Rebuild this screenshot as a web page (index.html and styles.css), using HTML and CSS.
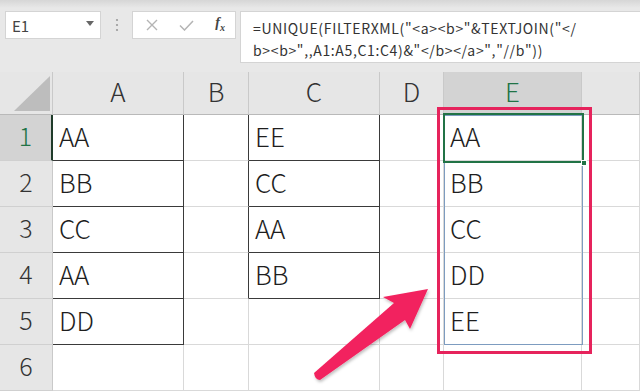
FILE: index.html
```html
<!doctype html>
<html lang="ja">
    <head>
        <meta charset="utf-8">
        <title>UNIQUE + FILTERXML</title>
        <link rel="stylesheet" href="styles.css">
    </head>
 <body>
    <div class="page">
        <!-- 数式バー -->
        <div class="bar">
            <div class="namebox">
                <span>E1</span>
                <svg class="caret" width="8" height="5" viewBox="0 0 8 5"><path d="M0 0h8L4 5z" fill="#666"/></svg>
            </div>
            <div class="grip">
                <svg width="4" height="14" viewBox="0 0 4 14"><circle cx="2" cy="2" r="1.1" fill="#9a9a9a"/><circle cx="2" cy="7" r="1.1" fill="#9a9a9a"/><circle cx="2" cy="12" r="1.1" fill="#9a9a9a"/></svg>
            </div>
            <div class="fxbox">
                <svg width="12" height="12" viewBox="0 0 12 12"><path d="M1 1l10 10M11 1L1 11" stroke="#b4b4b4" stroke-width="1.4" fill="none"/></svg>
                <svg width="15" height="11" viewBox="0 0 15 11"><path d="M1 5.5l4.5 4.5L14 1" stroke="#b4b4b4" stroke-width="1.5" fill="none"/></svg>
                <span class="fx">f<sub>x</sub></span>
            </div>
            <div class="formula">=UNIQUE(FILTERXML("&lt;a&gt;&lt;b&gt;"&amp;TEXTJOIN("&lt;/<br>b&gt;&lt;b&gt;",,A1:A5,C1:C4)&amp;"&lt;/b&gt;&lt;/a&gt;","//b"))</div>
        </div>

        <!-- シート -->
        <div class="sheet">
            <div class="hd corner">
                <svg width="36" height="35" viewBox="0 0 36 35"><path d="M0 35H36V0z" fill="#bdbdbd"/></svg>
            </div>
            <div class="hd">A</div>
            <div class="hd">B</div>
            <div class="hd">C</div>
            <div class="hd">D</div>
            <div class="hd sel">E</div>
            <div class="hd"></div>

            <div class="rh sel">1</div>
            <div class="c ink-r ink-b">AA</div>
            <div class="c ink-r"></div>
            <div class="c ink-r ink-b">EE</div>
            <div class="c"></div>
            <div class="c">AA</div>
            <div class="c"></div>

            <div class="rh">2</div>
            <div class="c ink-r ink-b">BB</div>
            <div class="c ink-r"></div>
            <div class="c ink-r ink-b">CC</div>
            <div class="c"></div>
            <div class="c">BB</div>
            <div class="c"></div>

            <div class="rh">3</div>
            <div class="c ink-r ink-b">CC</div>
            <div class="c ink-r"></div>
            <div class="c ink-r ink-b">AA</div>
            <div class="c"></div>
            <div class="c">CC</div>
            <div class="c"></div>

            <div class="rh">4</div>
            <div class="c ink-r ink-b">AA</div>
            <div class="c ink-r"></div>
            <div class="c ink-r ink-b">BB</div>
            <div class="c"></div>
            <div class="c">DD</div>
            <div class="c"></div>

            <div class="rh">5</div>
            <div class="c ink-r ink-b">DD</div>
            <div class="c"></div>
            <div class="c"></div>
            <div class="c"></div>
            <div class="c">EE</div>
            <div class="c"></div>

            <div class="rh">6</div>
            <div class="c"></div>
            <div class="c"></div>
            <div class="c"></div>
            <div class="c"></div>
            <div class="c"></div>
            <div class="c"></div>
        </div>

        <!-- 重ねる要素 -->
        <div class="spill"></div>
        <div class="active"><span class="handle"></span></div>
        <div class="mark"></div>
        <svg class="arrow" width="140" height="110" viewBox="300 280 140 110">
            <defs>
                <filter id="sh" x="-20%" y="-20%" width="140%" height="140%">
                    <feDropShadow dx="1" dy="2" stdDeviation="1.5" flood-color="#000" flood-opacity="0.25"/>
                </filter>
            </defs>
            <path d="M314 373 L394 303 L383 297 L428 289 L410 329 L405 320 L320 380 Q315 380 314 373z" fill="#f2235e" filter="url(#sh)"/>
        </svg>
    </div>
 </body>
</html>
```

FILE: styles.css
```css
*{
    margin:0;
    padding:0;
    box-sizing:border-box;
}
html,body{
    width:640px;
    height:391px;
    overflow:hidden;
    background:#fff;
}
.page{
    position:relative;
    width:640px;
    height:391px;
    font-family:"Noto Sans CJK JP","Noto Sans",sans-serif;
    color:#222;
}

/* 数式バー */
.bar{
    height:72px;
    display:flex;
    align-items:flex-start;
    padding:11px 0 0 5px;
    background:linear-gradient(#d6d6d6 0, #e8e8e8 8px, #e8e8e8 100%);
}
.namebox{
    width:96px;
    height:28px;
    background:#fff;
    border:1px solid #d4d4d4;
    display:flex;
    align-items:center;
    justify-content:space-between;
    padding:0 6px 0 6px;
    font-size:15px;
    color:#444;
}
.caret{
    margin-top:-4px;
}
.grip{
    width:31px;
    height:28px;
    display:flex;
    align-items:center;
    justify-content:center;
}
.fxbox{
    width:104px;
    height:28px;
    background:#fff;
    border:1px solid #d4d4d4;
    display:flex;
    align-items:center;
    justify-content:space-between;
    padding:0 10px 0 13px;
}
.fx{
    font-family:"Liberation Serif",serif;
    font-style:italic;
    font-weight:bold;
    font-size:14px;
    color:#444;
    margin-top:-3px;
}
.fx sub{
    font-size:10px;
}
.formula{
    flex:1;
    margin-left:4px;
    height:52px;
    background:#fff;
    border:1px solid #d4d4d4;
    border-right:none;
    padding:5px 0 0 12px;
    font-size:14px;
    letter-spacing:0.65px;
    line-height:22px;
    color:#333;
    white-space:nowrap;
}

/* シート */
.sheet{
    display:grid;
    grid-template-columns:53px 131px 65px 131px 64px 138px 58px;
    grid-template-rows:43px repeat(6,46px);
}
.hd,.rh{
    background:#e6e6e6;
    border-right:1px solid #c9c9c9;
    border-bottom:1px solid #b9b9b9;
    display:flex;
    align-items:center;
    justify-content:center;
    padding-bottom:5px;
    font-size:26px;
    font-weight:300;
    color:#333;
}
.rh{
    font-size:25px;
    border-bottom-color:#d0d0d0;
}
.hd.sel,.rh.sel{
    background:#d3d3d3;
    color:#217346;
}
.rh.sel{
    border-right:2px solid #1f3b2a;
}
.corner{
    align-items:flex-end;
    justify-content:flex-end;
    padding:0 2px 3px 0;
}
.c{
    border-right:1px solid #d9d9d9;
    border-bottom:1px solid #d9d9d9;
    display:flex;
    align-items:center;
    padding:0 0 5px 6px;
    font-size:26px;
    font-weight:300;
    color:#1e1e1e;
}
.c.ink-r{
    border-right-color:#3a3a3a;
}
.c.ink-b{
    border-bottom-color:#3a3a3a;
}

/* 重ねる要素 */
.spill{
    position:absolute;
    left:444px;
    top:115px;
    width:139px;
    height:230px;
    border:1px solid #7d9cc0;
}
.active{
    position:absolute;
    left:443px;
    top:113px;
    width:141px;
    height:50px;
    border:2px solid #217346;
}
.handle{
    position:absolute;
    right:-5px;
    bottom:-5px;
    width:6px;
    height:6px;
    background:#217346;
    border:1px solid #fff;
}
.mark{
    position:absolute;
    left:437px;
    top:107px;
    width:155px;
    height:247px;
    border:3px solid #e6235c;
}
.arrow{
    position:absolute;
    left:300px;
    top:280px;
}
```
